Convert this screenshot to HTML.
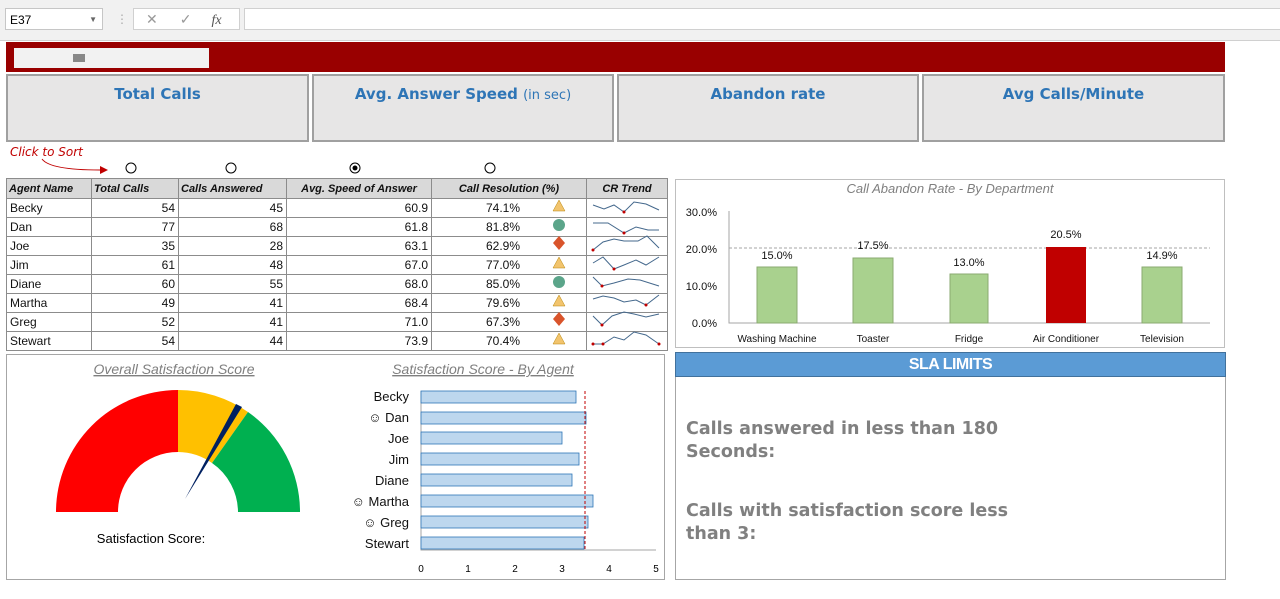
<!DOCTYPE html><html><head><style>
body{margin:0;width:1280px;height:599px;position:relative;background:#fff;font-family:"Liberation Sans",sans-serif;overflow:hidden}
.a{position:absolute}
.kpi{position:absolute;top:74px;height:68px;background:#e7e6e6;border:2px solid #a0a0a0;box-sizing:border-box;text-align:center;color:#2e75b6;font-family:"DejaVu Sans",sans-serif;font-weight:bold;font-size:15px;padding-top:9px}
table{position:absolute;left:6px;top:178px;border-collapse:collapse;font-size:12px;color:#111;table-layout:fixed;width:661px}
td{border:1px solid #8c8c8c;height:19px;padding:0 3px;box-sizing:border-box;white-space:nowrap;overflow:hidden}
th{border:1px solid #8c8c8c;height:19px;background:#d9d9d9;font-style:italic;font-size:11px;padding:0 2px;white-space:nowrap;overflow:hidden}
td.n{text-align:right}
</style></head><body>
<div class="a" style="left:0;top:0;width:1280px;height:40px;background:#f1f1f1;border-bottom:1px solid #d0d0d0"></div>
<div class="a" style="left:5px;top:8px;width:98px;height:22px;background:#fff;border:1px solid #c6c6c6;font-size:12px;line-height:22px;padding-left:4px;box-sizing:border-box">E37<span style="position:absolute;right:5px;font-size:8px;color:#666">▼</span></div>
<div class="a" style="left:116px;top:12px;color:#aaa;font-size:12px">⋮</div>
<div class="a" style="left:133px;top:8px;width:107px;height:22px;background:#fff;border:1px solid #d0d0d0;box-sizing:border-box;color:#999;font-size:14px;line-height:20px"><span style="margin-left:12px">✕</span><span style="margin-left:22px">✓</span><i style="margin-left:20px;font-family:'Liberation Serif';color:#555">fx</i></div>
<div class="a" style="left:244px;top:8px;width:1040px;height:22px;background:#fff;border:1px solid #d0d0d0;box-sizing:border-box"></div>
<div class="a" style="left:6px;top:42px;width:1219px;height:30px;background:#990000"></div>
<div class="a" style="left:14px;top:48px;width:195px;height:20px;background:#f2f2f2"></div>
<div class="a" style="left:73px;top:54px;width:12px;height:8px;background:#888"></div>
<div class="kpi" style="left:6px;width:303px">Total Calls</div>
<div class="kpi" style="left:312px;width:302px">Avg. Answer Speed <span style="font-weight:normal;font-size:13px">(in sec)</span></div>
<div class="kpi" style="left:617px;width:302px">Abandon rate</div>
<div class="kpi" style="left:922px;width:303px">Avg Calls/Minute</div>
<div class="a" style="left:10px;top:145px;color:#c00000;font-style:italic;font-size:12px;font-family:'DejaVu Sans',sans-serif">Click to Sort</div>
<svg class="a" style="left:0;top:150px" width="520" height="30"><path d="M42 9 Q50 20 100 20" stroke="#c00000" fill="none"/><path d="M100 16 L108 20 L100 24Z" fill="#c00000"/>
<circle cx="131" cy="18" r="5" fill="#fff" stroke="#000"/><circle cx="231" cy="18" r="5" fill="#fff" stroke="#000"/><circle cx="355" cy="18" r="5" fill="#fff" stroke="#000"/><circle cx="355" cy="18" r="2.5"/><circle cx="490" cy="18" r="5" fill="#fff" stroke="#000"/></svg>
<table>
<colgroup><col style="width:85px"><col style="width:87px"><col style="width:108px"><col style="width:145px"><col style="width:155px"><col style="width:81px"></colgroup>
<tr><th style="text-align:left">Agent Name</th><th style="text-align:left">Total Calls</th><th style="text-align:left">Calls Answered</th><th>Avg. Speed of Answer</th><th>Call Resolution (%)</th><th>CR Trend</th></tr>
<tr><td>Becky</td><td class="n">54</td><td class="n">45</td><td class="n">60.9</td><td class="n" style="padding-right:66px">74.1%</td><td></td></tr>
<tr><td>Dan</td><td class="n">77</td><td class="n">68</td><td class="n">61.8</td><td class="n" style="padding-right:66px">81.8%</td><td></td></tr>
<tr><td>Joe</td><td class="n">35</td><td class="n">28</td><td class="n">63.1</td><td class="n" style="padding-right:66px">62.9%</td><td></td></tr>
<tr><td>Jim</td><td class="n">61</td><td class="n">48</td><td class="n">67.0</td><td class="n" style="padding-right:66px">77.0%</td><td></td></tr>
<tr><td>Diane</td><td class="n">60</td><td class="n">55</td><td class="n">68.0</td><td class="n" style="padding-right:66px">85.0%</td><td></td></tr>
<tr><td>Martha</td><td class="n">49</td><td class="n">41</td><td class="n">68.4</td><td class="n" style="padding-right:66px">79.6%</td><td></td></tr>
<tr><td>Greg</td><td class="n">52</td><td class="n">41</td><td class="n">71.0</td><td class="n" style="padding-right:66px">67.3%</td><td></td></tr>
<tr><td>Stewart</td><td class="n">54</td><td class="n">44</td><td class="n">73.9</td><td class="n" style="padding-right:66px">70.4%</td><td></td></tr>
</table>
<svg class="a" style="left:0;top:197px" width="670" height="152">
<g stroke="#b8860b" stroke-width=".5" fill="#f2c46d">
<path d="M559 3 L565 14 L553 14Z"/><path d="M559 60 L565 71 L553 71Z"/><path d="M559 98 L565 109 L553 109Z"/><path d="M559 136 L565 147 L553 147Z"/></g>
<circle cx="559" cy="28" r="6" fill="#5ba58a"/><circle cx="559" cy="85" r="6" fill="#5ba58a"/>
<path d="M559 39 L565 46 L559 53 L553 46Z" fill="#d9542b"/><path d="M559 115 L565 122 L559 129 L553 122Z" fill="#d9542b"/>
<g stroke="#44688c" fill="none" stroke-width="1">
<path d="M593 8 L604 12 L614 8 L624 15 L634 5 L646 7 L659 13"/>
<path d="M593 26 L608 26 L624 36 L636 30 L648 33 L659 33"/>
<path d="M593 53 L603 45 L614 42 L624 44 L638 44 L647 39 L659 51"/>
<path d="M593 66 L603 60 L614 72 L624 68 L636 63 L646 68 L659 60"/>
<path d="M593 80 L602 89 L614 86 L628 82 L640 83 L659 89"/>
<path d="M593 102 L603 99 L614 101 L624 105 L636 103 L646 108 L659 98"/>
<path d="M593 119 L602 128 L612 119 L624 115 L634 117 L646 120 L659 117"/>
<path d="M593 147 L603 147 L614 140 L624 143 L634 135 L646 138 L659 147"/></g>
<g fill="#c00000"><circle cx="624" cy="15" r="1.5"/><circle cx="624" cy="36" r="1.5"/><circle cx="593" cy="53" r="1.5"/><circle cx="614" cy="72" r="1.5"/><circle cx="602" cy="89" r="1.5"/><circle cx="646" cy="108" r="1.5"/><circle cx="602" cy="128" r="1.5"/><circle cx="593" cy="147" r="1.5"/><circle cx="603" cy="147" r="1.5"/><circle cx="659" cy="147" r="1.5"/></g>
</svg>
<svg class="a" style="left:675px;top:179px" width="551" height="170" font-family="Liberation Sans" font-size="11">
<rect x=".5" y=".5" width="549" height="168" fill="#fff" stroke="#bfbfbf"/>
<text x="275" y="14" text-anchor="middle" font-style="italic" fill="#7f7f7f" font-size="13">Call Abandon Rate - By Department</text>
<path d="M54 32 V144 H535" stroke="#a6a6a6" fill="none"/>
<path d="M54 69 H535" stroke="#a6a6a6" stroke-dasharray="3,2"/>
<g text-anchor="end" fill="#111"><text x="42" y="37">30.0%</text><text x="42" y="74">20.0%</text><text x="42" y="111">10.0%</text><text x="42" y="148">0.0%</text></g>
<g fill="#a9d18e" stroke="#8aaa70"><rect x="82" y="88" width="40" height="56"/><rect x="178" y="79" width="40" height="65"/><rect x="275" y="95" width="38" height="49"/><rect x="467" y="88" width="40" height="56"/></g>
<rect x="371" y="68" width="40" height="76" fill="#c00000"/>
<g text-anchor="middle" fill="#111"><text x="102" y="80">15.0%</text><text x="198" y="70">17.5%</text><text x="294" y="87">13.0%</text><text x="391" y="59">20.5%</text><text x="487" y="80">14.9%</text>
<text x="102" y="163" font-size="10">Washing Machine</text><text x="198" y="163" font-size="10">Toaster</text><text x="294" y="163" font-size="10">Fridge</text><text x="391" y="163" font-size="10">Air Conditioner</text><text x="487" y="163" font-size="10">Television</text></g>
</svg>
<div class="a" style="left:6px;top:354px;width:659px;height:226px;border:1px solid #a6a6a6;box-sizing:border-box"></div>
<svg class="a" style="left:0;top:354px" width="670" height="226" font-family="Liberation Sans">
<text x="174" y="20" text-anchor="middle" font-style="italic" fill="#7f7f7f" font-size="14" text-decoration="underline">Overall Satisfaction Score</text>
<text x="483" y="20" text-anchor="middle" font-style="italic" fill="#7f7f7f" font-size="14" text-decoration="underline">Satisfaction Score - By Agent</text>
<path d="M56 158 A122 122 0 0 1 178 36 L178 98 A60 60 0 0 0 118 158Z" fill="#ff0000"/>
<path d="M178 36 A122 122 0 0 1 248 58 L212 109 A60 60 0 0 0 178 98Z" fill="#ffc000"/>
<path d="M248 58 A122 122 0 0 1 300 158 L238 158 A60 60 0 0 0 212 109Z" fill="#00b050"/>
<path d="M236 50 L242 53 L185 145Z" fill="#002060"/>
<text x="151" y="189" text-anchor="middle" font-size="13">Satisfaction Score:</text>
<path d="M421 37 V196 H656" stroke="#a6a6a6" fill="none"/>
<g fill="#bdd7ee" stroke="#2e75b6" stroke-width=".8">
<rect x="421" y="37" width="155" height="12"/><rect x="421" y="58" width="165" height="12"/><rect x="421" y="78" width="141" height="12"/><rect x="421" y="99" width="158" height="12"/><rect x="421" y="120" width="151" height="12"/><rect x="421" y="141" width="172" height="12"/><rect x="421" y="162" width="167" height="12"/><rect x="421" y="183" width="163" height="12"/></g>
<path d="M585 37 V196" stroke="#c00000" stroke-dasharray="3,2"/>
<g text-anchor="end" font-size="13" fill="#111"><text x="409" y="47">Becky</text><text x="409" y="68">☺ Dan</text><text x="409" y="89">Joe</text><text x="409" y="110">Jim</text><text x="409" y="131">Diane</text><text x="409" y="152">☺ Martha</text><text x="409" y="173">☺ Greg</text><text x="409" y="194">Stewart</text></g>
<g text-anchor="middle" font-size="10"><text x="421" y="218">0</text><text x="468" y="218">1</text><text x="515" y="218">2</text><text x="562" y="218">3</text><text x="609" y="218">4</text><text x="656" y="218">5</text></g>
</svg>
<div class="a" style="left:675px;top:352px;width:551px;height:228px;border:1px solid #a6a6a6;box-sizing:border-box"></div>
<div class="a" style="left:675px;top:352px;width:551px;height:25px;background:#5b9bd5;border:1px solid #41719c;box-sizing:border-box;color:#fff;font-weight:bold;font-size:16px;text-align:center;line-height:23px;letter-spacing:-.5px">SLA LIMITS</div>
<div class="a" style="left:686px;top:418px;color:#808080;font-weight:bold;font-size:17.5px;line-height:23px;font-family:'DejaVu Sans',sans-serif">Calls answered in less than 180<br>Seconds:</div>
<div class="a" style="left:686px;top:500px;color:#808080;font-weight:bold;font-size:17.5px;line-height:23px;font-family:'DejaVu Sans',sans-serif">Calls with satisfaction score less<br>than 3:</div>
</body></html>
